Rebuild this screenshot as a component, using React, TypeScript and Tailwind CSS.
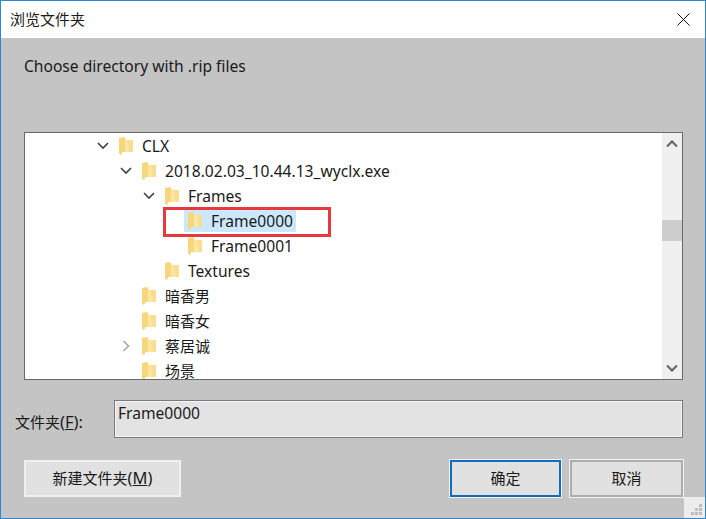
import React from "react";

const FONT = "font-['Noto_Sans','Noto_Sans_CJK_SC',sans-serif]";

const Folder = () => (
  <svg width="14" height="18" viewBox="0 0 14 18" className="shrink-0">
    <path d="M5 1 L8 3 L14 3 L14 15 L5 15 Z" fill="#fbe6a6" />
    <path d="M0 1 L5 0 L6 1 L6 15 L3 15 L3 17 L1 18 L0 16 Z" fill="#f6d77c" />
    <path d="M8 3 L14 3 L14 15 L11 15 Z" fill="#f9de90" />
  </svg>
);

type Row = { label: string; level: number; arrow?: "open" | "closed"; selected?: boolean; cjk?: boolean };

const rows: Row[] = [
  { label: "CLX", level: 0, arrow: "open" },
  { label: "2018.02.03_10.44.13_wyclx.exe", level: 1, arrow: "open" },
  { label: "Frames", level: 2, arrow: "open" },
  { label: "Frame0000", level: 3, selected: true },
  { label: "Frame0001", level: 3 },
  { label: "Textures", level: 2 },
  { label: "暗香男", level: 1, cjk: true },
  { label: "暗香女", level: 1, cjk: true },
  { label: "蔡居诚", level: 1, arrow: "closed", cjk: true },
  { label: "场景", level: 1, cjk: true },
];

const indent = ["pl-[70px]", "pl-[93px]", "pl-[116px]", "pl-[139px]"];

const Arrow = ({ kind }: { kind?: "open" | "closed" }) => (
  <span className="flex w-[16px] shrink-0 justify-center">
    {kind === "open" && (
      <svg width="12" height="8" viewBox="0 0 12 8">
        <path d="M1 1 L6 6 L11 1" fill="none" stroke="#404040" strokeWidth="1.6" />
      </svg>
    )}
    {kind === "closed" && (
      <svg width="8" height="12" viewBox="0 0 8 12">
        <path d="M1.5 1 L6.5 6 L1.5 11" fill="none" stroke="#a6a6a6" strokeWidth="1.6" />
      </svg>
    )}
  </span>
);

const TreeRow = ({ row }: { row: Row }) => (
  <div className={`flex h-[25px] shrink-0 items-center ${indent[row.level]}`}>
    <Arrow kind={row.arrow} />
    <div className={`ml-[4px] flex h-[23px] items-center gap-[9px] pl-[4px] pr-[3px] ${row.selected ? "bg-[#cce8ff]" : ""}`}>
      <Folder />
      <span className={`pt-[2px] leading-none text-[#1a1a1a] ${row.cjk ? "text-[15px]" : "text-[15.6px]"}`}>{row.label}</span>
    </div>
  </div>
);

const Button = ({ children, className }: { children: React.ReactNode; className: string }) => (
  <button className={`flex h-[37px] items-center justify-center bg-[#e1e1e1] text-[15px] text-[#1a1a1a] ${className}`}>
    {children}
  </button>
);

export default function App() {
  return (
    <div className={`flex h-[519px] w-[706px] flex-col border border-[#2b87d3] bg-[#c4c4c4] text-[#1a1a1a] ${FONT}`}>
      <div className="flex h-[37px] shrink-0 items-center justify-between bg-white pl-[9px] pr-[15px]">
        <span className="text-[15px]">浏览文件夹</span>
        <svg width="13" height="13" viewBox="0 0 13 13">
          <path d="M0.5 0.5 L12.5 12.5 M12.5 0.5 L0.5 12.5" stroke="#111" strokeWidth="1" />
        </svg>
      </div>

      <div className="flex min-h-0 flex-1 flex-col pl-[23px] pr-[22px]">
        <p className="mt-[18px] h-[21px] text-[15.6px] leading-[21px]">Choose directory with .rip files</p>

        <div className="relative mt-[55px] flex h-[248px] shrink-0 border border-[#696969] bg-white">
          <div className="min-w-0 flex-1 overflow-hidden">
            {rows.map((row) => (
              <TreeRow key={row.label} row={row} />
            ))}
          </div>
          <div className="flex w-[20px] shrink-0 flex-col items-center bg-[#f0f0f0]">
            <svg width="12" height="8" viewBox="0 0 12 8" className="mt-[7px]">
              <path d="M1 6.5 L6 1.5 L11 6.5" fill="none" stroke="#606060" strokeWidth="2" />
            </svg>
            <div className="mt-[72px] h-[21px] w-full bg-[#cdcdcd]" />
            <svg width="12" height="8" viewBox="0 0 12 8" className="mt-auto mb-[7px]">
              <path d="M1 1.5 L6 6.5 L11 1.5" fill="none" stroke="#606060" strokeWidth="2" />
            </svg>
          </div>
          <div className="absolute left-[138px] top-[74px] h-[30px] w-[168px] border-[3px] border-[#e5383f]" />
        </div>

        <div className="relative mt-[20px] flex h-[38px] shrink-0">
          <span className="absolute left-[-9px] top-[10px] text-[15px]">
            文件夹
            <span className="text-[16.5px]">
              (<span className="underline">F</span>):
            </span>
          </span>
          <div className="ml-[90px] flex-1 border border-[#7a7a7a] bg-[#e3e3e3] pl-[3px] text-[15.6px] leading-[24px] shadow-[inset_0_0_0_1px_#f4f4f4]">
            Frame0000
          </div>
        </div>

        <div className="mt-[22px] flex shrink-0">
          <Button className="w-[157px] border-2 border-[#f0f0f0]">
            新建文件夹
            <span className="text-[16.5px]">
              (<span className="underline">M</span>)
            </span>
          </Button>
          <Button className="ml-auto w-[111px] border-2 border-[#0f6fbe] shadow-[0_0_0_1px_#f2f2f2]">确定</Button>
          <Button className="ml-[9px] w-[113px] border-2 border-[#adadad] shadow-[0_0_0_1px_#f2f2f2]">取消</Button>
        </div>
      </div>

      <div className="absolute left-[684px] top-[497px] flex h-[21px] w-[21px] items-end justify-end bg-[#ececec] p-[2px]">
        <svg width="12" height="12" viewBox="0 0 12 12" fill="#bdbdbd">
          <rect x="8" y="0" width="3" height="3" />
          <rect x="4" y="4" width="3" height="3" />
          <rect x="8" y="4" width="3" height="3" />
          <rect x="0" y="8" width="3" height="3" />
          <rect x="4" y="8" width="3" height="3" />
          <rect x="8" y="8" width="3" height="3" />
        </svg>
      </div>
    </div>
  );
}
